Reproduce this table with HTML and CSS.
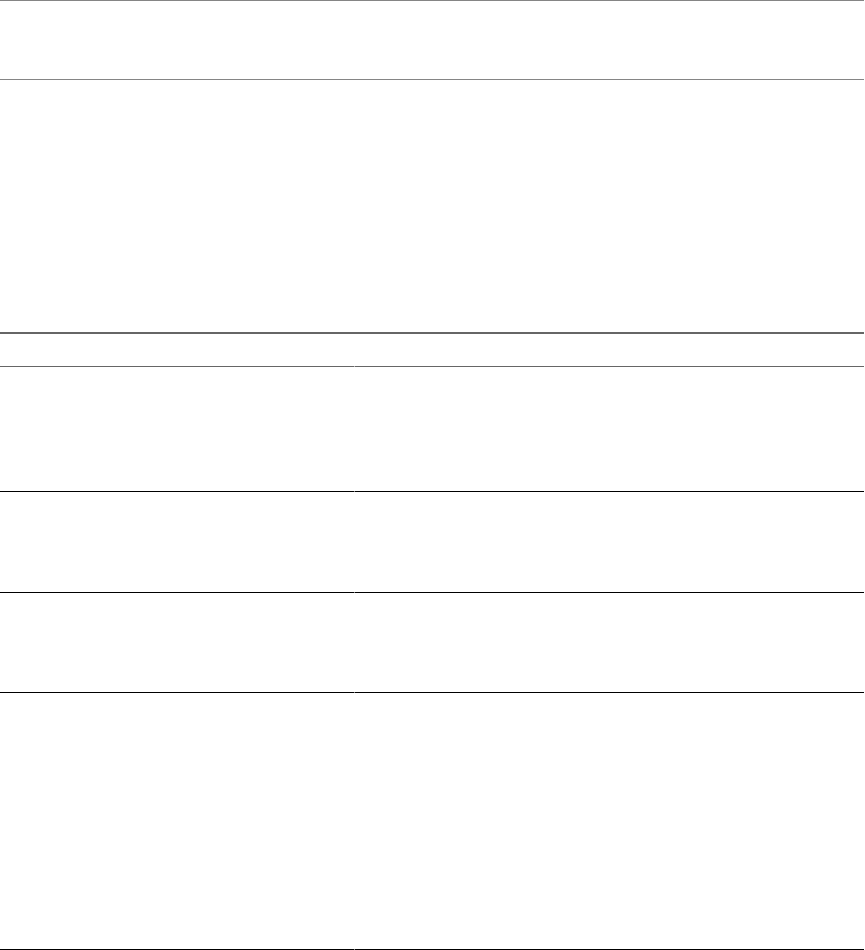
FILE: index.html
```html
<!DOCTYPE html>
<html>
<head>
<meta charset="utf-8">
<link rel="stylesheet" href="styles.css">
</head>
<body>
<div class="page">
  <header class="banner"></header>
  <div class="spacer"></div>
  <div class="table">
    <div class="row head">
      <div class="cell"></div>
      <div class="cell"></div>
    </div>
    <div class="row r1">
      <div class="cell"></div>
      <div class="cell"></div>
    </div>
    <div class="row r2">
      <div class="cell"></div>
      <div class="cell"></div>
    </div>
    <div class="row r3">
      <div class="cell"></div>
      <div class="cell"></div>
    </div>
    <div class="row r4">
      <div class="cell"></div>
      <div class="cell"></div>
    </div>
  </div>
</div>
</body>
</html>
```
FILE: styles.css
```css
html, body {
  margin: 0;
  padding: 0;
  background: #ffffff;
  font-family: "Liberation Sans", Arial, sans-serif;
}
.page {
  width: 864px;
  display: flex;
  flex-direction: column;
}
.banner {
  height: 78px;
  border-top: 1px solid #858585;
  border-bottom: 1px solid #858585;
}
.spacer {
  height: 252px;
}
.table {
  display: flex;
  flex-direction: column;
}
.row {
  display: grid;
  grid-template-columns: 354px 1fr;
}
.cell {
  border-bottom: 1px solid #000;
}
.cell + .cell {
  border-left: 1px solid transparent;
}
.head {
  border-top: 2px solid #666666;
}
.head .cell {
  height: 32px;
  border-bottom-color: #666666;
}
.r1 .cell { height: 124px; }
.r2 .cell { height: 100px; }
.r3 .cell { height: 99px; }
.r4 .cell { height: 256px; }
```
